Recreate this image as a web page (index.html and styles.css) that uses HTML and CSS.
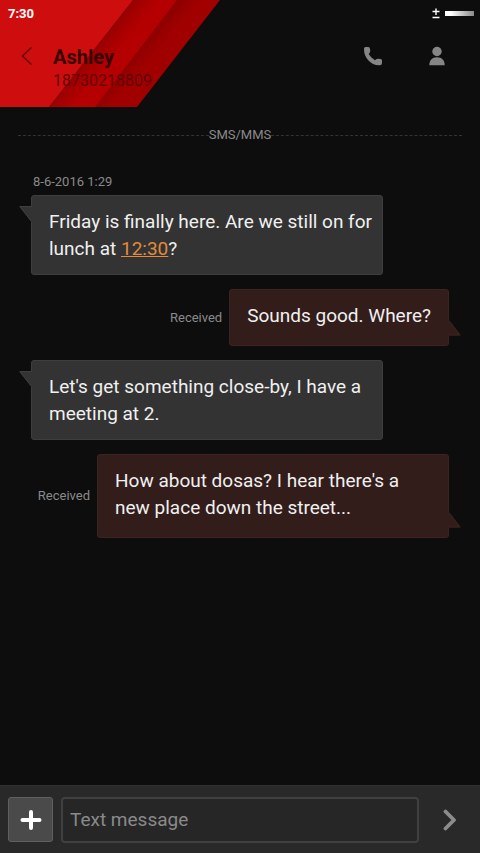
FILE: index.html
```html
<!DOCTYPE html>
<html lang="en">
<head>
<meta charset="utf-8">
<meta name="viewport" content="width=device-width, initial-scale=1">
<title>Ashley</title>
<link rel="stylesheet" href="styles.css">
</head>
<body>
<header class="header">
  <svg class="banner" viewBox="0 0 240 107" aria-hidden="true">
    <defs>
      <linearGradient id="fold-a" gradientUnits="userSpaceOnUse" x1="91" y1="53" x2="107" y2="66">
        <stop offset="0" stop-color="#970202"/>
        <stop offset="0.5" stop-color="#a80000"/>
        <stop offset="1" stop-color="#b40000"/>
      </linearGradient>
      <linearGradient id="fold-b" gradientUnits="userSpaceOnUse" x1="135" y1="53" x2="148" y2="64">
        <stop offset="0" stop-color="#8c0000"/>
        <stop offset="0.5" stop-color="#980000"/>
        <stop offset="1" stop-color="#a10000"/>
      </linearGradient>
    </defs>
    <path d="M176 0H220L137 107H94z" fill="url(#fold-b)"/>
    <path d="M133 0H177L95 107H49z" fill="url(#fold-a)"/>
    <path d="M0 0H133L49 107H0z" fill="#ce0e0e"/>
  </svg>
  <div class="status">
    <time class="clock">7:30</time>
    <span class="battery">
      <svg width="8" height="11" viewBox="0 0 8 11" aria-hidden="true"><path d="M4 0.500V7M0.500 3.500H7.500M0.500 9.500H7.500" stroke="#fff" stroke-width="1.400"/></svg>
      <span class="level"></span>
    </span>
  </div>
  <div class="bar">
    <button class="icon-button back" aria-label="Back">
      <svg width="12" height="20" viewBox="0 0 12 20" aria-hidden="true"><path d="M10.500 1.500L1.500 10L10.500 18.500" fill="none" stroke="#650606" stroke-width="1.500"/></svg>
    </button>
    <div class="contact">
      <h1 class="name">Ashley</h1>
      <p class="number">18730218809</p>
    </div>
    <button class="icon-button" aria-label="Call">
      <svg width="20" height="20" viewBox="0 0 20 20" aria-hidden="true"><path fill="#858585" d="M1 2.500Q1 1 2.500 1H5.300Q6.800 1 6.900 2.500Q7.600 4.500 7 6.300L5.700 8Q7.800 11.800 11.900 14.300L13.600 13.100Q15.200 12.500 17.500 13.100Q19 13.300 19 14.600V17Q19 19.200 16.800 19.200C8 19.600 0.600 12 1 2.500z"/></svg>
    </button>
    <button class="icon-button" aria-label="Contact details">
      <svg width="16" height="20" viewBox="0 0 16 20" aria-hidden="true"><circle cx="8" cy="5.500" r="4.700" fill="#858585"/><path fill="#858585" d="M0.300 19.200C0.300 14.500 3 11.300 8 11.300S15.700 14.500 15.700 19.200z"/></svg>
    </button>
  </div>
</header>
<main class="thread">
  <div class="divider"><span>SMS/MMS</span></div>
  <time class="date">8-6-2016 1:29</time>
  <div class="message incoming"><p class="bubble">Friday is finally here. Are we still on for lunch at <a href="#time">12:30</a>?<svg class="tail" width="13" height="17" viewBox="0 0 13 17" aria-hidden="true"><path d="M0 0.500H13V16.500z" fill="#333"/><path d="M13 0.500H1L12 15" fill="none" stroke="#3e3e3e"/></svg></p></div>
  <div class="message outgoing"><span class="state">Received</span><p class="bubble">Sounds good. Where?<svg class="tail" width="13" height="17" viewBox="0 0 13 17" aria-hidden="true"><path d="M0 0L13 16.500H0z" fill="#331d1b"/><path d="M1 1.500L12 16H0" fill="none" stroke="#3d2320"/></svg></p></div>
  <div class="message incoming"><p class="bubble">Let's get something close-by, I have a meeting at 2.<svg class="tail" width="13" height="17" viewBox="0 0 13 17" aria-hidden="true"><path d="M0 0.500H13V16.500z" fill="#333"/><path d="M13 0.500H1L12 15" fill="none" stroke="#3e3e3e"/></svg></p></div>
  <div class="message outgoing"><span class="state">Received</span><p class="bubble">How about dosas? I hear there's a new place down the street...<svg class="tail" width="13" height="17" viewBox="0 0 13 17" aria-hidden="true"><path d="M0 0L13 16.500H0z" fill="#331d1b"/><path d="M1 1.500L12 16H0" fill="none" stroke="#3d2320"/></svg></p></div>
</main>
<form class="composer">
  <button class="add" type="button" aria-label="Add attachment">
    <svg width="22" height="22" viewBox="0 0 22 22" aria-hidden="true"><path d="M11 3V19M2.500 11H19.500" stroke="#fff" stroke-width="4" stroke-linecap="round"/></svg>
  </button>
  <input class="field" type="text" aria-label="Text message" placeholder="Text message">
  <button class="send" type="submit" aria-label="Send">
    <svg width="14" height="22" viewBox="0 0 14 22" aria-hidden="true"><path d="M2.500 2.500L11 11L2.500 19.500" fill="none" stroke="#8c8c8c" stroke-width="3.800" stroke-linecap="round" stroke-linejoin="round"/></svg>
  </button>
</form>
</body>
</html>
```
FILE: styles.css
```css
* {
  box-sizing: border-box;
}

body {
  display: flex;
  flex-direction: column;
  min-height: 100vh;
  margin: 0;
  background: #0d0d0d;
  color: #f0f0f0;
  font-family: Roboto, "Liberation Sans", sans-serif;
}

button,
input {
  margin: 0;
  font: inherit;
}

h1,
p {
  margin: 0;
}

svg {
  display: block;
}

.header {
  position: relative;
  height: 107px;
}

.banner {
  position: absolute;
  top: 0;
  left: 0;
  z-index: -1;
  height: 100%;
}

.status {
  display: flex;
  align-items: center;
  justify-content: space-between;
  height: 27px;
  padding: 0 6px 0 8px;
}

.clock {
  color: #fff;
  font-size: 13px;
  font-weight: 700;
}

.battery {
  display: flex;
  align-items: center;
  gap: 5px;
}

.level {
  width: 29px;
  height: 5px;
  background: linear-gradient(to right, #fff 20%, #888);
}

.bar {
  display: flex;
  align-items: center;
  height: 58px;
  padding: 0 11px 0 0;
}

.icon-button {
  display: flex;
  flex: none;
  align-items: center;
  justify-content: center;
  width: 64px;
  height: 56px;
  padding: 0;
  border: 0;
  background: none;
}

.back {
  width: 53px;
}

.contact {
  flex: 1;
  align-self: start;
  padding-top: 17px;
}

.name {
  color: #3a0000;
  font-size: 20px;
  font-weight: 700;
  line-height: 26px;
}

.number {
  color: #620404;
  font-size: 16px;
  line-height: 22px;
}

.thread {
  display: flex;
  flex: 1;
  flex-direction: column;
  gap: 14px;
  padding: 19px 18px;
}

.divider {
  display: grid;
  grid-template-columns: 1fr auto 1fr;
  align-items: center;
  color: #8a8a8a;
  font-size: 13px;
  line-height: 18px;
}

.divider::before,
.divider::after {
  border-top: 1px dashed #333;
  content: "";
}

.date,
.state {
  color: #8a8a8a;
  font-size: 13px;
  line-height: 18px;
}

.date {
  margin: 15px 15px -10px;
}

.message {
  display: flex;
  align-items: center;
  gap: 7px;
  padding: 0 13px;
}

.outgoing {
  justify-content: flex-end;
}

.bubble {
  position: relative;
  max-width: 352px;
  padding: 12px 17px;
  border: 1px solid #3e3e3e;
  border-radius: 3px;
  background: #333;
  font-size: 19px;
  line-height: 27px;
}

.incoming .bubble {
  padding-right: 9px;
}

.outgoing .bubble {
  padding-bottom: 16px;
  border-color: #3d2320;
  background: #331d1b;
}

.bubble a {
  color: #e28a3c;
}

.tail {
  position: absolute;
}

.incoming .tail {
  top: 10px;
  left: -13px;
}

.outgoing .tail {
  right: -13px;
  bottom: 9px;
}

.composer {
  display: flex;
  align-items: center;
  height: 68px;
  padding: 0 0 0 8px;
  border-top: 1px solid #303030;
  background: #292929;
}

.add {
  display: flex;
  flex: none;
  align-items: center;
  justify-content: center;
  width: 45px;
  height: 45px;
  margin-right: 8px;
  padding: 0;
  border: 1px solid #606060;
  border-radius: 3px;
  background: #4a4a4a;
}

.field {
  flex: 1;
  min-width: 0;
  height: 46px;
  padding: 0 7px;
  border: 2px solid #404040;
  border-radius: 4px;
  background: #262626;
  color: #f0f0f0;
  font-size: 19px;
}

.field::placeholder {
  color: #8a8a8a;
  opacity: 1;
}

.send {
  display: flex;
  flex: none;
  align-items: center;
  justify-content: center;
  width: 61px;
  height: 46px;
  padding: 0;
  border: 0;
  background: none;
}
```
